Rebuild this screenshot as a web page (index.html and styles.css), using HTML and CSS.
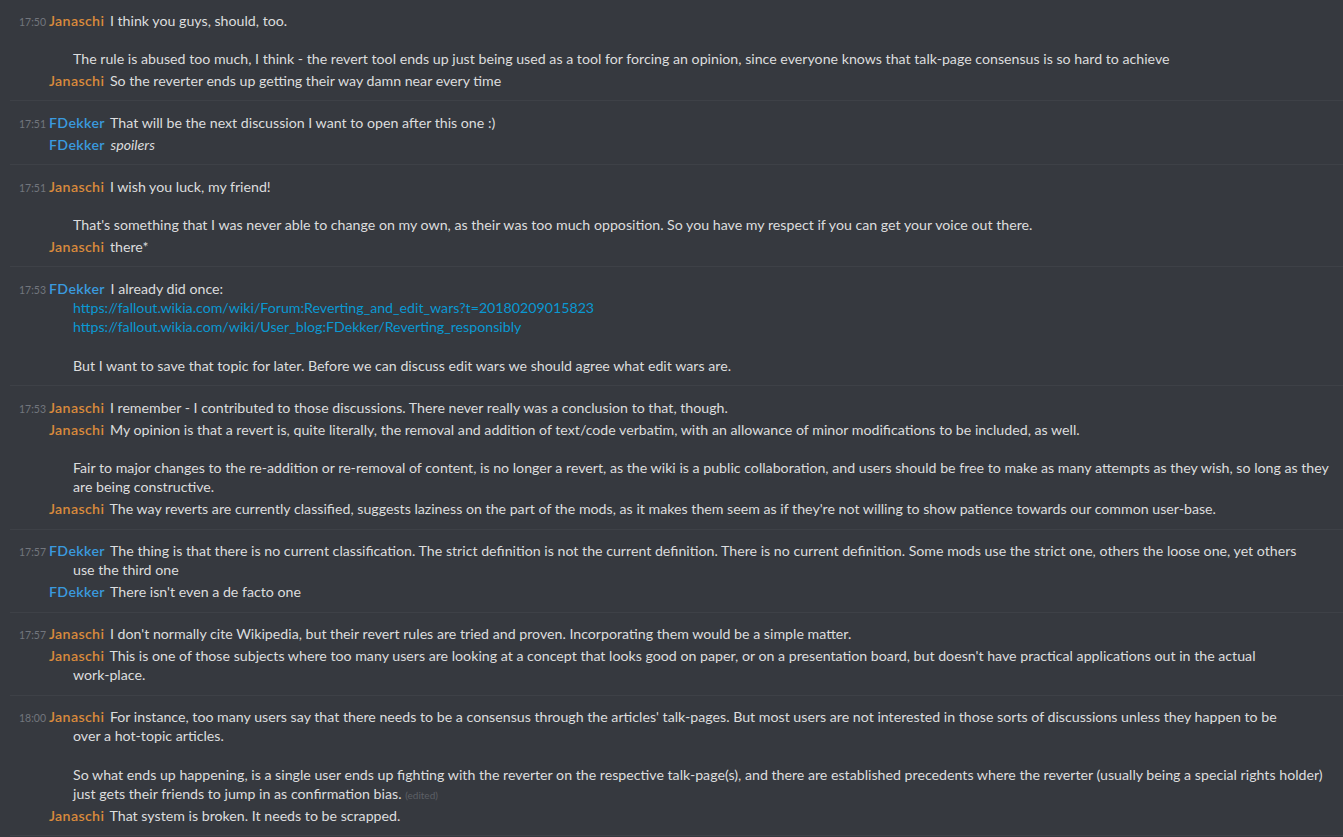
FILE: index.html
```html
<!DOCTYPE html>
<html lang="en">
<head>
<meta charset="utf-8">
<title>Chat log</title>
<link rel="stylesheet" href="styles.css">
</head>
<body>
<div class="log">

  <div class="group">
    <div class="msg"><span class="time">17:50</span><span class="name jan">Janaschi</span> I think you guys, should, too.<br><br>The rule is abused too much, I think - the revert tool ends up just being used as a tool for forcing an opinion, since everyone knows that talk-page consensus is so hard to achieve</div>
    <div class="msg"><span class="name jan">Janaschi</span> So the reverter ends up getting their way damn near every time</div>
  </div>

  <div class="group">
    <div class="msg"><span class="time">17:51</span><span class="name fd">FDekker</span> That will be the next discussion I want to open after this one :)</div>
    <div class="msg"><span class="name fd">FDekker</span> <em>spoilers</em></div>
  </div>

  <div class="group">
    <div class="msg"><span class="time">17:51</span><span class="name jan">Janaschi</span> I wish you luck, my friend!<br><br>That's something that I was never able to change on my own, as their was too much opposition. So you have my respect if you can get your voice out there.</div>
    <div class="msg"><span class="name jan">Janaschi</span> there*</div>
  </div>

  <div class="group">
    <div class="msg"><span class="time">17:53</span><span class="name fd">FDekker</span> I already did once:<br><a class="link" href="#">https://fallout.wikia.com/wiki/Forum:Reverting_and_edit_wars?t=20180209015823</a><br><a class="link" href="#">https://fallout.wikia.com/wiki/User_blog:FDekker/Reverting_responsibly</a><br><br>But I want to save that topic for later. Before we can discuss edit wars we should agree what edit wars are.</div>
  </div>

  <div class="group">
    <div class="msg"><span class="time">17:53</span><span class="name jan">Janaschi</span> I remember - I contributed to those discussions. There never really was a conclusion to that, though.</div>
    <div class="msg"><span class="name jan">Janaschi</span> My opinion is that a revert is, quite literally, the removal and addition of text/code verbatim, with an allowance of minor modifications to be included, as well.<br><br>Fair to major changes to the re-addition or re-removal of content, is no longer a revert, as the wiki is a public collaboration, and users should be free to make as many attempts as they wish, so long as they are being constructive.</div>
    <div class="msg"><span class="name jan">Janaschi</span> The way reverts are currently classified, suggests laziness on the part of the mods, as it makes them seem as if they're not willing to show patience towards our common user-base.</div>
  </div>

  <div class="group">
    <div class="msg"><span class="time">17:57</span><span class="name fd">FDekker</span> The thing is that there is no current classification. The strict definition is not the current definition. There is no current definition. Some mods use the strict one, others the loose one, yet others use the third one</div>
    <div class="msg"><span class="name fd">FDekker</span> There isn't even a de facto one</div>
  </div>

  <div class="group">
    <div class="msg"><span class="time">17:57</span><span class="name jan">Janaschi</span> I don't normally cite Wikipedia, but their revert rules are tried and proven. Incorporating them would be a simple matter.</div>
    <div class="msg"><span class="name jan">Janaschi</span> This is one of those subjects where too many users are looking at a concept that looks good on paper, or on a presentation board, but doesn't have practical applications out in the actual <span class="nowrap">work-place.</span></div>
  </div>

  <div class="group">
    <div class="msg"><span class="time">18:00</span><span class="name jan">Janaschi</span> For instance, too many users say that there needs to be a consensus through the articles' talk-pages. But most users are not interested in those sorts of discussions unless they happen to be over a hot-topic articles.<br><br>So what ends up happening, is a single user ends up fighting with the reverter on the respective talk-page(s), and there are established precedents where the reverter (usually being a special rights holder) just gets their friends to jump in as confirmation bias. <span class="edited">(edited)</span></div>
    <div class="msg"><span class="name jan">Janaschi</span> That system is broken. It needs to be scrapped.</div>
  </div>

</div>
</body>
</html>
```

FILE: styles.css
```css
html, body {
  margin: 0;
  padding: 0;
  background: #36393f;
}

body {
  font-family: "Lato", "Noto Sans", sans-serif;
  font-size: 14.2px;
  line-height: 19.25px;
  color: #dcddde;
  overflow: hidden;
}

.log {
  margin-top: -1px;
  padding-left: 10px;
}

.group {
  padding: 11.5px 0 10px 0;
  border-bottom: 1px solid #3e4147;
}

.msg {
  padding-left: 63px;
  padding-right: 8px;
  text-indent: -24px;
}

.msg + .msg {
  margin-top: 2.75px;
}

.msg::before {
  content: "";
  float: right;
  width: 35px;
  height: 1px;
}

.time {
  display: inline-block;
  text-indent: 0;
  width: 30px;
  margin-left: -30px;
  padding-right: 6px;
  box-sizing: border-box;
  text-align: right;
  font-size: 10.5px;
  line-height: 10px;
  color: #72767d;
  vertical-align: baseline;
}

.name {
  font-weight: 600;
  letter-spacing: 0.35px;
  margin-right: 2px;
}

.jan {
  color: #d98a3c;
}

.fd {
  color: #3a9ade;
}

em {
  font-style: italic;
}

.link {
  color: #0a98d2;
  text-decoration: none;
}

.nowrap {
  white-space: nowrap;
}

.edited {
  font-size: 10px;
  line-height: 10px;
  color: #5d6066;
}
```
